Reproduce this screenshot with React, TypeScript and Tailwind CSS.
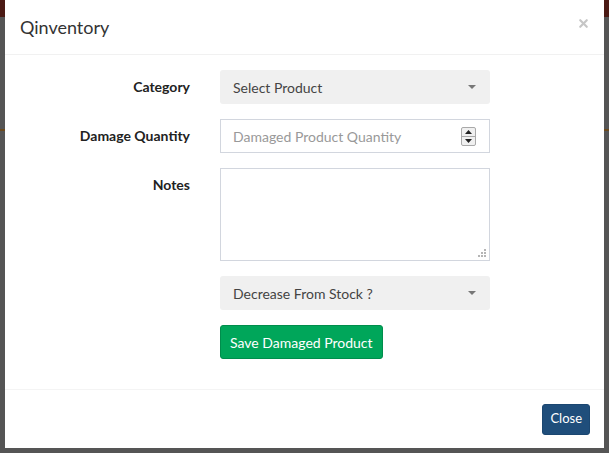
import { X } from "lucide-react";

const FONT = { fontFamily: "Lato, 'Noto Sans', sans-serif" };

function Caret() {
  return (
    <svg width="8" height="4" viewBox="0 0 8 4" className="shrink-0">
      <path d="M0 0h8L4 4z" fill="#777" />
    </svg>
  );
}

function Spinner() {
  return (
    <div className="flex h-[19px] w-[15px] flex-col overflow-hidden rounded-[2px] border border-[#a9a9a9] bg-[#f0f0f0]">
      <div className="flex flex-1 items-center justify-center border-b border-[#a9a9a9]">
        <svg width="7" height="4" viewBox="0 0 7 4">
          <path d="M0 4h7L3.5 0z" fill="#222" />
        </svg>
      </div>
      <div className="flex flex-1 items-center justify-center">
        <svg width="7" height="4" viewBox="0 0 7 4">
          <path d="M0 0h7L3.5 4z" fill="#222" />
        </svg>
      </div>
    </div>
  );
}

function Grip() {
  return (
    <svg width="8" height="8" viewBox="0 0 8 8" className="absolute bottom-[3px] right-[3px]">
      <g fill="#b5b5b5">
        <rect x="6" y="0" width="2" height="2" />
        <rect x="3" y="3" width="2" height="2" />
        <rect x="6" y="3" width="2" height="2" />
        <rect x="0" y="6" width="2" height="2" />
        <rect x="3" y="6" width="2" height="2" />
        <rect x="6" y="6" width="2" height="2" />
      </g>
    </svg>
  );
}

function Row({ label, children }: { label?: string; children: React.ReactNode }) {
  return (
    <div className="mb-[15px] flex">
      <div className="w-[200px] pr-[30px] pt-[7px] text-right text-[14px] font-bold leading-[20px] text-[#222]">
        {label}
      </div>
      <div className="w-[270px]">{children}</div>
    </div>
  );
}

function SelectBox({ text }: { text: string }) {
  return (
    <div className="flex h-[34px] items-center justify-between rounded-[3px] bg-[#f0f0f0] pl-[13px] pr-[14px] text-[14px] text-[#444]">
      <span>{text}</span>
      <Caret />
    </div>
  );
}

export default function App() {
  return (
    <div
      className="h-[453px] w-[609px] overflow-hidden bg-[linear-gradient(to_bottom,#4b1a14_0,#4b1a14_17px,#555555_17px,#555555_129px,#6b4a1e_129px,#6b4a1e_131px,#555555_131px)] px-[5px]"
      style={FONT}
    >
      <div className="flex h-[448px] w-[599px] flex-col bg-white">
        <div className="flex h-[55px] items-center justify-between border-b border-[#f1f1f1] pl-[15px] pr-[14px]">
          <h4 className="text-[18px] leading-[25px] text-[#333]">Qinventory</h4>
          <X size={13} strokeWidth={4} className="mb-[8px] text-[#c6c6c6]" />
        </div>

        <div className="flex-1 px-[15px] pt-[15px]">
          <Row label="Category">
            <SelectBox text="Select Product" />
          </Row>
          <Row label="Damage Quantity">
            <div className="flex h-[34px] items-center justify-between border border-[#d2d6de] pl-[12px] pr-[13px] text-[14px] text-[#999]">
              <span>Damaged Product Quantity</span>
              <Spinner />
            </div>
          </Row>
          <Row label="Notes">
            <div className="relative h-[93px] w-full border border-[#d2d6de]">
              <Grip />
            </div>
          </Row>
          <Row>
            <SelectBox text="Decrease From Stock ?" />
          </Row>
          <Row>
            <button className="h-[34px] rounded-[3px] border border-[#008d4c] bg-[#00a65a] px-[9px] text-[14px] text-white">
              Save Damaged Product
            </button>
          </Row>
        </div>

        <div className="flex h-[59px] items-center justify-end border-t border-[#f4f4f4] px-[14px]">
          <button className="h-[31px] rounded-[3px] border border-[#1b4771] bg-[#1f4e7b] px-[7px] text-[13px] text-white">
            Close
          </button>
        </div>
      </div>
    </div>
  );
}
